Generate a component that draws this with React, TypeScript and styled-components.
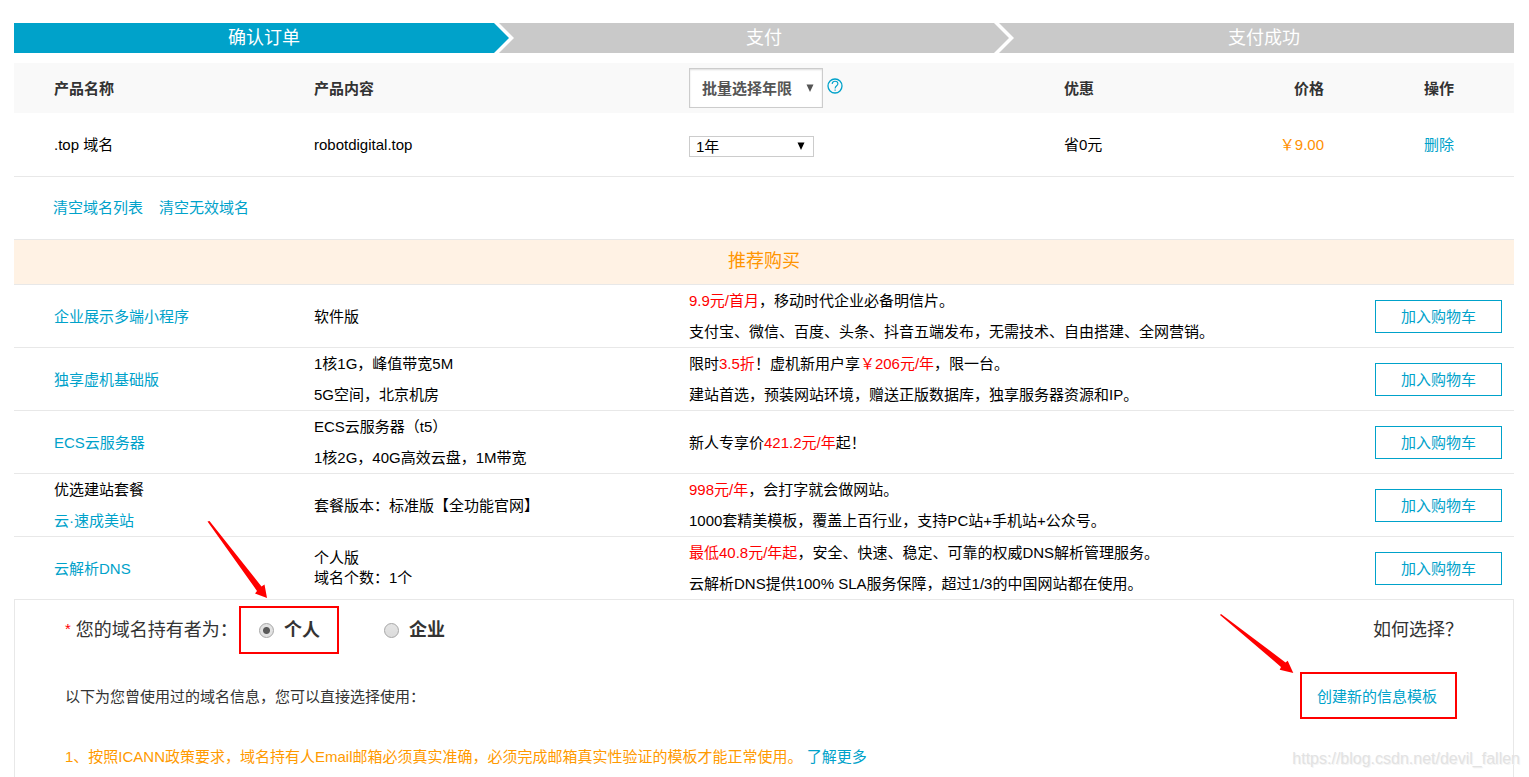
import React from "react";
import styled, { createGlobalStyle } from "styled-components";

const BLUE = "#00a2ca";
const LINE = "#e8e8e8";

const GlobalStyle = createGlobalStyle`
  * { box-sizing: border-box; }
  body {
    margin: 0;
    background: #fff;
    color: #000;
    font: 15px/31px "Liberation Sans", Arial, "Noto Sans CJK SC", sans-serif;
  }
  button, select, input { font: inherit; margin: 0; }
`;

const Page = styled.main`
  position: relative;
  display: flex;
  flex-direction: column;
  height: 100vh;
  overflow: hidden;
  padding: 23px 15px 0 14px;
`;

const Steps = styled.ol`
  flex: none;
  display: grid;
  grid-template-columns: repeat(3, 1fr);
  list-style: none;
  margin: 0 0 10px;
  padding: 0;
`;

const StepItem = styled.li<{ $active?: boolean }>`
  display: flex;
  position: relative;
  justify-content: center;
  height: 30px;
  line-height: 30px;
  font-size: 18px;
  color: #fff;
  background: ${(p) => (p.$active ? BLUE : "#c9c9c9")};
`;

const StepArrow = styled.svg`
  position: absolute;
  right: 0;
  top: 0;
  width: 20px;
  height: 30px;
`;

const Table = styled.table`
  flex: none;
  width: 100%;
  table-layout: fixed;
  border-collapse: separate;
  border-spacing: 0;
`;

const HeadCell = styled.th`
  height: 50px;
  padding: 0;
  background: #f9f9f9;
  color: #333;
  text-align: left;
`;

const Cell = styled.td`
  height: 64px;
  padding: 0;
  border-bottom: 1px solid ${LINE};
`;

const NameHead = styled(HeadCell)`
  padding-left: 40px;
`;
const NameCell = styled(Cell)`
  padding-left: 40px;
`;
const PriceHead = styled(HeadCell)`
  text-align: right;
  padding-right: 10px;
`;
const PriceCell = styled(Cell)`
  text-align: right;
  padding-right: 10px;
  color: #ff9000;
`;
const OpHead = styled(HeadCell)`
  padding-left: 90px;
`;
const OpCell = styled(Cell)`
  padding-left: 90px;
`;

const Link = styled.a`
  color: ${BLUE};
  text-decoration: none;
`;

const Picker = styled.div`
  display: flex;
  gap: 4px;
`;

const SelectBox = styled.span<{ $large?: boolean }>`
  position: relative;
  display: block;
  width: ${(p) => (p.$large ? 134 : 125)}px;
  height: ${(p) => (p.$large ? 40 : 21)}px;
  margin-top: ${(p) => (p.$large ? 0 : 3)}px;
  color: ${(p) => (p.$large ? "#555" : "#000")};
  svg {
    position: absolute;
    right: 9px;
    top: ${(p) => (p.$large ? 16 : 6)}px;
    pointer-events: none;
  }
`;

const Select = styled.select<{ $large?: boolean }>`
  display: block;
  appearance: none;
  width: 100%;
  height: 100%;
  padding: 0 ${(p) => (p.$large ? 12 : 6)}px;
  border: 1px solid #ccc;
  border-radius: 0;
  background: #fff;
  color: inherit;
  font-weight: ${(p) => (p.$large ? "bold" : "normal")};
  line-height: 19px;
  box-shadow: ${(p) => (p.$large ? "inset 0 1px 2px #ddd" : "none")};
`;

const HelpLink = styled.a`
  display: block;
  width: 16px;
  height: 16px;
  margin-top: 10px;
  line-height: 0;
`;

const ClearBar = styled.nav`
  flex: none;
  display: flex;
  gap: 16px;
  height: 62px;
  padding: 15px 0 0 39px;
`;

const Banner = styled.h2`
  flex: none;
  margin: 0;
  height: 46px;
  line-height: 42px;
  border: solid ${LINE};
  border-width: 1px 0;
  background: #fff2e4;
  color: #ff9500;
  font-size: 18px;
  font-weight: normal;
  text-align: center;
`;

const OfferCell = styled.td`
  height: 63px;
  padding: 0;
  border-bottom: 1px solid ${LINE};
  tr:last-child > & {
    height: 62px;
    border-bottom: 0;
  }
`;
const OfferName = styled(OfferCell)`
  padding-left: 40px;
`;
const OfferAction = styled(OfferCell)`
  padding-right: 12px;
  text-align: right;
`;

const Lines = styled.div<{ $tight?: boolean }>`
  line-height: ${(p) => (p.$tight ? 20 : 31)}px;
  white-space: nowrap;
`;

const Hot = styled.span`
  color: #f00;
`;

const CartButton = styled.button`
  display: inline-block;
  vertical-align: middle;
  width: 127px;
  height: 33px;
  padding: 0;
  border: 1px solid ${BLUE};
  background: #fff;
  color: ${BLUE};
  line-height: 31px;
`;

const Panel = styled.section`
  flex: 1;
  min-height: 178px;
  padding: 6px 50px 0;
  border: 1px solid ${LINE};
  border-bottom: 0;
  color: #333;
`;

const OwnerRow = styled.fieldset`
  display: flex;
  align-items: center;
  margin: 0;
  padding: 0;
  border: 0;
  height: 48px;
  font-size: 18px;
`;

const OwnerTitle = styled.span`
  width: 174px;
  white-space: nowrap;
`;

const Star = styled.span`
  color: #f00;
  font-size: 15px;
  line-height: 1;
  vertical-align: 2px;
`;

const Marked = styled.span`
  position: relative;
  display: flex;
  border: 2px solid #f00;
`;
const OwnerMark = styled(Marked)`
  height: 48px;
  margin-right: 45px;
  padding: 0 17px 0 18px;
`;
const CreateMark = styled(Marked)`
  height: 47px;
  margin-right: 6px;
  padding: 1px 18px 0 15px;
  align-items: center;
`;

const Choice = styled.label`
  display: flex;
  align-items: center;
  gap: 10px;
  font-weight: bold;
`;

const Radio = styled.input`
  appearance: none;
  width: 15px;
  height: 15px;
  border: 1px solid #a6a6a6;
  border-radius: 50%;
  background: linear-gradient(#e4e4e4, #dcdcdc);
  &:checked {
    background: radial-gradient(circle, #5a5a5a 3px, #e2e2e2 4px);
  }
`;

const HowTo = styled.span`
  margin-left: auto;
`;

const ReuseRow = styled.div`
  display: flex;
  align-items: center;
  justify-content: space-between;
  margin: 18px 0 22px;
`;

const ReuseText = styled.span`
  padding-top: 2px;
`;

const Notice = styled.p`
  margin: 0;
  color: #ff9a00;
`;

const OwnerArrow = styled.svg`
  position: absolute;
  left: -35px;
  top: -90px;
  width: 62px;
  height: 82px;
`;
const CreateArrow = styled.svg`
  position: absolute;
  left: -84px;
  top: -62px;
  width: 76px;
  height: 62px;
`;

const Watermark = styled.span`
  position: absolute;
  right: 9px;
  bottom: 3px;
  color: #e2e2e2;
  font-size: 16px;
  text-shadow: 1px 1px 0 #f4f4f4;
`;

function Step({ label, active, last }: { label: string; active?: boolean; last?: boolean }) {
  return (
    <StepItem $active={active}>
      {label}
      {!last && (
        <StepArrow viewBox="0 0 20 30" aria-hidden="true">
          <path d="M0 0H20V30H0Z" fill="#c9c9c9" />
          <path d="M0 0H5L20 15L5 30H0Z" fill="#fff" />
          <path d="M0 0L15 15L0 30Z" fill={active ? BLUE : "#c9c9c9"} />
        </StepArrow>
      )}
    </StepItem>
  );
}

function Caret() {
  return (
    <svg width="8" height="8" viewBox="0 0 8 8" aria-hidden="true">
      <path d="M0.5 0.5H7.5L4 8Z" fill="currentColor" />
    </svg>
  );
}

type Offer = {
  name: React.ReactNode;
  content: React.ReactNode;
  tight?: boolean;
  desc: React.ReactNode;
};

const offers: Offer[] = [
  {
    name: <Link href="#">企业展示多端小程序</Link>,
    content: "软件版",
    desc: <><Hot>9.9元/首月</Hot>，移动时代企业必备明信片。<br />支付宝、微信、百度、头条、抖音五端发布，无需技术、自由搭建、全网营销。</>,
  },
  {
    name: <Link href="#">独享虚机基础版</Link>,
    content: <>1核1G，峰值带宽5M<br />5G空间，北京机房</>,
    desc: <>限时<Hot>3.5折</Hot>！虚机新用户享<Hot>￥206元/年</Hot>，限一台。<br />建站首选，预装网站环境，赠送正版数据库，独享服务器资源和IP。</>,
  },
  {
    name: <Link href="#">ECS云服务器</Link>,
    content: <>ECS云服务器（t5）<br />1核2G，40G高效云盘，1M带宽</>,
    desc: <>新人专享价<Hot>421.2元/年</Hot>起！</>,
  },
  {
    name: <>优选建站套餐<br /><Link href="#">云·速成美站</Link></>,
    content: "套餐版本：标准版【全功能官网】",
    desc: <><Hot>998元/年</Hot>，会打字就会做网站。<br />1000套精美模板，覆盖上百行业，支持PC站+手机站+公众号。</>,
  },
  {
    name: <Link href="#">云解析DNS</Link>,
    content: <>个人版<br />域名个数：1个</>,
    tight: true,
    desc: <><Hot>最低40.8元/年起</Hot>，安全、快速、稳定、可靠的权威DNS解析管理服务。<br />云解析DNS提供100% SLA服务保障，超过1/3的中国网站都在使用。</>,
  },
];

export default function App() {
  return (
    <>
      <GlobalStyle />
      <Page lang="zh-CN">
        <Steps>
          <Step label="确认订单" active />
          <Step label="支付" />
          <Step label="支付成功" last />
        </Steps>

        <Table>
          <colgroup>
            <col width="20%" />
            <col width="25%" />
            <col width="25%" />
            <col width="10%" />
            <col width="8%" />
            <col width="12%" />
          </colgroup>
          <thead>
            <tr>
              <NameHead>产品名称</NameHead>
              <HeadCell>产品内容</HeadCell>
              <HeadCell>
                <Picker>
                  <SelectBox $large>
                    <Select $large aria-label="批量选择年限" defaultValue="all">
                      <option value="all">批量选择年限</option>
                    </Select>
                    <Caret />
                  </SelectBox>
                  <HelpLink href="#" aria-label="年限说明">
                    <svg width="16" height="16" viewBox="0 0 16 16" fill="none" stroke={BLUE} strokeWidth="1.3">
                      <circle cx="8" cy="8" r="7" />
                      <path d="M5.2 5.9C5.2 4.3 6.4 3.3 8 3.3S10.9 4.3 10.9 5.8C10.9 7.7 8.1 7.9 8.1 10.4M8.1 11.4V12.7" strokeWidth="1.1" />
                    </svg>
                  </HelpLink>
                </Picker>
              </HeadCell>
              <HeadCell>优惠</HeadCell>
              <PriceHead>价格</PriceHead>
              <OpHead>操作</OpHead>
            </tr>
          </thead>
          <tbody>
            <tr>
              <NameCell>.top 域名</NameCell>
              <Cell>robotdigital.top</Cell>
              <Cell>
                <SelectBox>
                  <Select aria-label="年限" defaultValue="1">
                    <option value="1">1年</option>
                  </Select>
                  <Caret />
                </SelectBox>
              </Cell>
              <Cell>省0元</Cell>
              <PriceCell>￥9.00</PriceCell>
              <OpCell><Link href="#">删除</Link></OpCell>
            </tr>
          </tbody>
        </Table>

        <ClearBar>
          <Link href="#">清空域名列表</Link>
          <Link href="#">清空无效域名</Link>
        </ClearBar>

        <Banner>推荐购买</Banner>

        <Table>
          <colgroup>
            <col width="20%" />
            <col width="25%" />
            <col width="43%" />
            <col width="12%" />
          </colgroup>
          <tbody>
            {offers.map((o, i) => (
              <tr key={i}>
                <OfferName><Lines>{o.name}</Lines></OfferName>
                <OfferCell><Lines $tight={o.tight}>{o.content}</Lines></OfferCell>
                <OfferCell><Lines>{o.desc}</Lines></OfferCell>
                <OfferAction><CartButton type="button">加入购物车</CartButton></OfferAction>
              </tr>
            ))}
          </tbody>
        </Table>

        <Panel>
          <OwnerRow aria-label="域名持有者">
            <OwnerTitle><Star>*</Star> 您的域名持有者为：</OwnerTitle>
            <OwnerMark>
              <Choice>
                <Radio type="radio" name="owner" defaultChecked />
                个人
              </Choice>
              <OwnerArrow viewBox="206 518 62 82" aria-hidden="true">
                <path d="M207.5 521.5L209.5 521L261.5 586.5L264.5 584.5L267 598L255 593.5L257 591Z" fill="#f00" />
              </OwnerArrow>
            </OwnerMark>
            <Choice>
              <Radio type="radio" name="owner" />
              企业
            </Choice>
            <HowTo>如何选择？</HowTo>
          </OwnerRow>

          <ReuseRow>
            <ReuseText>以下为您曾使用过的域名信息，您可以直接选择使用：</ReuseText>
            <CreateMark>
              <Link href="#">创建新的信息模板</Link>
              <CreateArrow viewBox="1218 612 76 62" aria-hidden="true">
                <path d="M1220 615L1221 614L1285.5 662.5L1287.7 660.7L1293.3 673L1279.7 669.7L1281 667Z" fill="#f00" />
              </CreateArrow>
            </CreateMark>
          </ReuseRow>

          <Notice>
            1、按照ICANN政策要求，域名持有人Email邮箱必须真实准确，必须完成邮箱真实性验证的模板才能正常使用。 <Link href="#">了解更多</Link>
          </Notice>
        </Panel>
        <Watermark>https://blog.csdn.net/devil_fallen</Watermark>
      </Page>
    </>
  );
}
